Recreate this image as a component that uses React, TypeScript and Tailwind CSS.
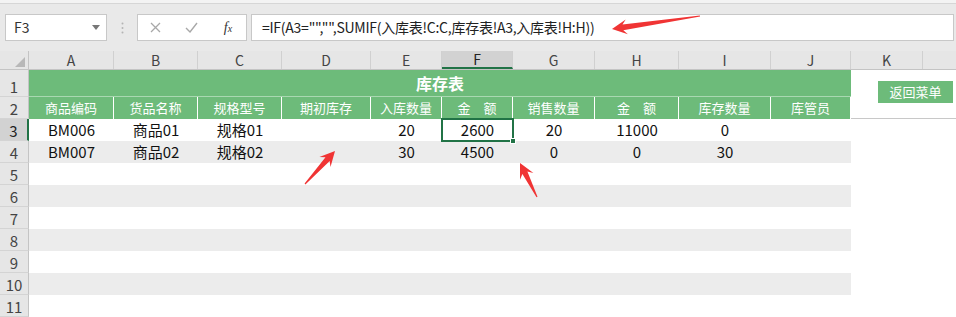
import React from 'react';

const cols = [
  { k: 'A', w: 'w-[85px]' },
  { k: 'B', w: 'w-[84px]' },
  { k: 'C', w: 'w-[84px]' },
  { k: 'D', w: 'w-[89px]' },
  { k: 'E', w: 'w-[71px]' },
  { k: 'F', w: 'w-[71px]' },
  { k: 'G', w: 'w-[82px]' },
  { k: 'H', w: 'w-[84px]' },
  { k: 'I', w: 'w-[92px]' },
  { k: 'J', w: 'w-[80px]' },
  { k: 'K', w: 'w-[72px]' },
];

const headers = ['商品编码', '货品名称', '规格型号', '期初库存', '入库数量', '金　额', '销售数量', '金　额', '库存数量', '库管员'];

const data: string[][] = [
  ['BM006', '商品01', '规格01', '', '20', '2600', '20', '11000', '0', ''],
  ['BM007', '商品02', '规格02', '', '30', '4500', '0', '0', '30', ''],
];

const font = { fontFamily: '"Noto Sans CJK SC", "Noto Sans", sans-serif' };

// tapered red arrow, tail -> tip
const arrow = (x1: number, y1: number, x2: number, y2: number) => {
  const dx = x2 - x1;
  const dy = y2 - y1;
  const L = Math.hypot(dx, dy);
  const ux = dx / L;
  const uy = dy / L;
  const nx = -uy;
  const ny = ux;
  const h = 15;
  const pt = (a: number, b: number) => `${(x1 + ux * a + nx * b).toFixed(1)},${(y1 + uy * a + ny * b).toFixed(1)}`;
  return [
    pt(0, -0.6),
    pt(L - h + 4, -2.8),
    pt(L - h, -7.5),
    pt(L, 0),
    pt(L - h, 7.5),
    pt(L - h + 4, 2.8),
    pt(0, 0.6),
  ].join(' ');
};

const RowHead: React.FC<{ n: number; h: string; active?: boolean }> = ({ n, h, active }) => (
  <div
    className={`w-[29px] shrink-0 ${h} flex items-end justify-center text-[15px] leading-none border-b border-[#d4d4d4] ${
      active ? 'bg-[#d2d2d2] text-[#222] border-r-2 border-r-[#217346]' : 'bg-[#e6e6e6] text-[#444] border-r border-r-[#c4c4c4]'
    }`}
  >
    <span className="mb-[2px]">{n}</span>
  </div>
);

export default function App() {
  return (
    <div className="relative w-[956px] h-[317px] overflow-hidden bg-white" style={font}>
      {/* top strip */}
      <div className="h-[4px] bg-[#f3f3f3] border-b border-[#d6d6d6]" />

      {/* formula bar */}
      <div className="h-[47px] bg-[#e9e9e9] flex items-start pt-[10px] pl-[5px] pr-[2px]">
        <div className="w-[102px] h-[27px] bg-white border border-[#c8c8c8] flex items-center justify-between pl-[8px] pr-[6px]">
          <span className="text-[14px] text-[#333]">F3</span>
          <svg width="8" height="5" viewBox="0 0 8 5">
            <path d="M0 0h8L4 5z" fill="#777" />
          </svg>
        </div>
        <div className="w-[30px] h-[27px] flex items-center justify-center">
          <svg width="3" height="12" viewBox="0 0 3 12">
            <circle cx="1.5" cy="1.5" r="1" fill="#b4b4b4" />
            <circle cx="1.5" cy="6" r="1" fill="#b4b4b4" />
            <circle cx="1.5" cy="10.5" r="1" fill="#b4b4b4" />
          </svg>
        </div>
        <div className="w-[110px] h-[27px] bg-white border border-[#c8c8c8] flex items-center">
          <div className="w-[34px] flex justify-center">
            <svg width="11" height="11" viewBox="0 0 11 11">
              <path d="M1 1l9 9M10 1l-9 9" stroke="#a8a8a8" strokeWidth="1.3" />
            </svg>
          </div>
          <div className="w-[38px] flex justify-center">
            <svg width="13" height="11" viewBox="0 0 13 11">
              <path d="M1 6l4 4 7-9" stroke="#a8a8a8" strokeWidth="1.4" fill="none" />
            </svg>
          </div>
          <div className="w-[36px] flex justify-center">
            <span className="italic text-[14px] text-[#333]" style={{ fontFamily: '"Liberation Serif", serif' }}>
              f<span className="text-[10px]">x</span>
            </span>
          </div>
        </div>
        <div className="ml-[4px] flex-1 h-[27px] bg-white border border-[#c8c8c8] flex items-center pl-[10px]">
          <span className="text-[14px] text-[#222] tracking-[-0.25px] whitespace-nowrap">
            =IF(A3="","",SUMIF(入库表!C:C,库存表!A3,入库表!H:H))
          </span>
        </div>
      </div>

      {/* column headers */}
      <div className="flex h-[19px] bg-[#e6e6e6] border-b border-[#c4c4c4]">
        <div className="w-[29px] shrink-0 border-r border-[#c4c4c4] flex items-end justify-end pr-[3px] pb-[2px]">
          <svg width="10" height="10" viewBox="0 0 10 10">
            <path d="M10 0v10H0z" fill="#b8b8b8" />
          </svg>
        </div>
        {cols.map((c) => (
          <div
            key={c.k}
            className={`${c.w} shrink-0 flex items-center justify-center text-[14px] border-r border-[#d0d0d0] ${
              c.k === 'F' ? 'bg-[#d2d2d2] text-[#222] border-b-2 border-b-[#217346]' : 'text-[#444]'
            }`}
          >
            {c.k}
          </div>
        ))}
        <div className="flex-1" />
      </div>

      {/* row 1 */}
      <div className="flex">
        <RowHead n={1} h="h-[27px]" />
        <div className="w-[822px] h-[27px] bg-[#6dbb7a] border-b border-[#a9d8b1] flex items-center justify-center text-white text-[16px] font-bold">
          库存表
        </div>
        <div className="flex-1 h-[27px]" />
      </div>

      {/* row 2 */}
      <div className="flex">
        <RowHead n={2} h="h-[22px]" />
        {headers.map((t, i) => (
          <div
            key={i}
            className={`${cols[i].w} shrink-0 h-[22px] bg-[#6dbb7a] border-r border-white flex items-center justify-center text-white text-[13px] whitespace-pre`}
          >
            {t}
          </div>
        ))}
        <div className="flex-1 h-[22px] border-b border-[#c8c8c8]" />
      </div>

      {/* data rows */}
      {Array.from({ length: 9 }).map((_, r) => {
        const n = r + 3;
        const row = data[r];
        const band = n % 2 === 0 ? 'bg-[#ececec]' : 'bg-white';
        return (
          <div key={n} className="flex">
            <RowHead n={n} h="h-[22px]" active={n === 3} />
            <div className={`flex w-[822px] h-[22px] ${band}`}>
              {cols.slice(0, 10).map((c, i) => (
                <div
                  key={c.k}
                  className={`${c.w} shrink-0 relative flex items-center justify-center text-[15px] text-[#111]`}
                >
                  {row ? row[i] : ''}
                  {n === 3 && c.k === 'F' && (
                    <div className="absolute -left-[1px] -top-[1px] -right-[1px] -bottom-[1px] border-2 border-[#217346]">
                      <div className="absolute -right-[4px] -bottom-[4px] w-[6px] h-[6px] bg-[#217346] border border-white" />
                    </div>
                  )}
                </div>
              ))}
            </div>
            <div className="flex-1 h-[22px]" />
          </div>
        );
      })}

      {/* floating button */}
      <div className="absolute left-[878px] top-[81px] w-[75px] h-[22px] bg-[#6dbb7a] flex items-center justify-center text-white text-[13px]">
        返回菜单
      </div>

      {/* annotation arrows */}
      <svg className="absolute inset-0 pointer-events-none" width="956" height="317">
        <polygon points={arrow(700, 16, 612, 29)} fill="#f03434" />
        <polygon points={arrow(305, 184, 335, 151)} fill="#f03434" />
        <polygon points={arrow(537, 197, 520, 163)} fill="#f03434" />
      </svg>
    </div>
  );
}
